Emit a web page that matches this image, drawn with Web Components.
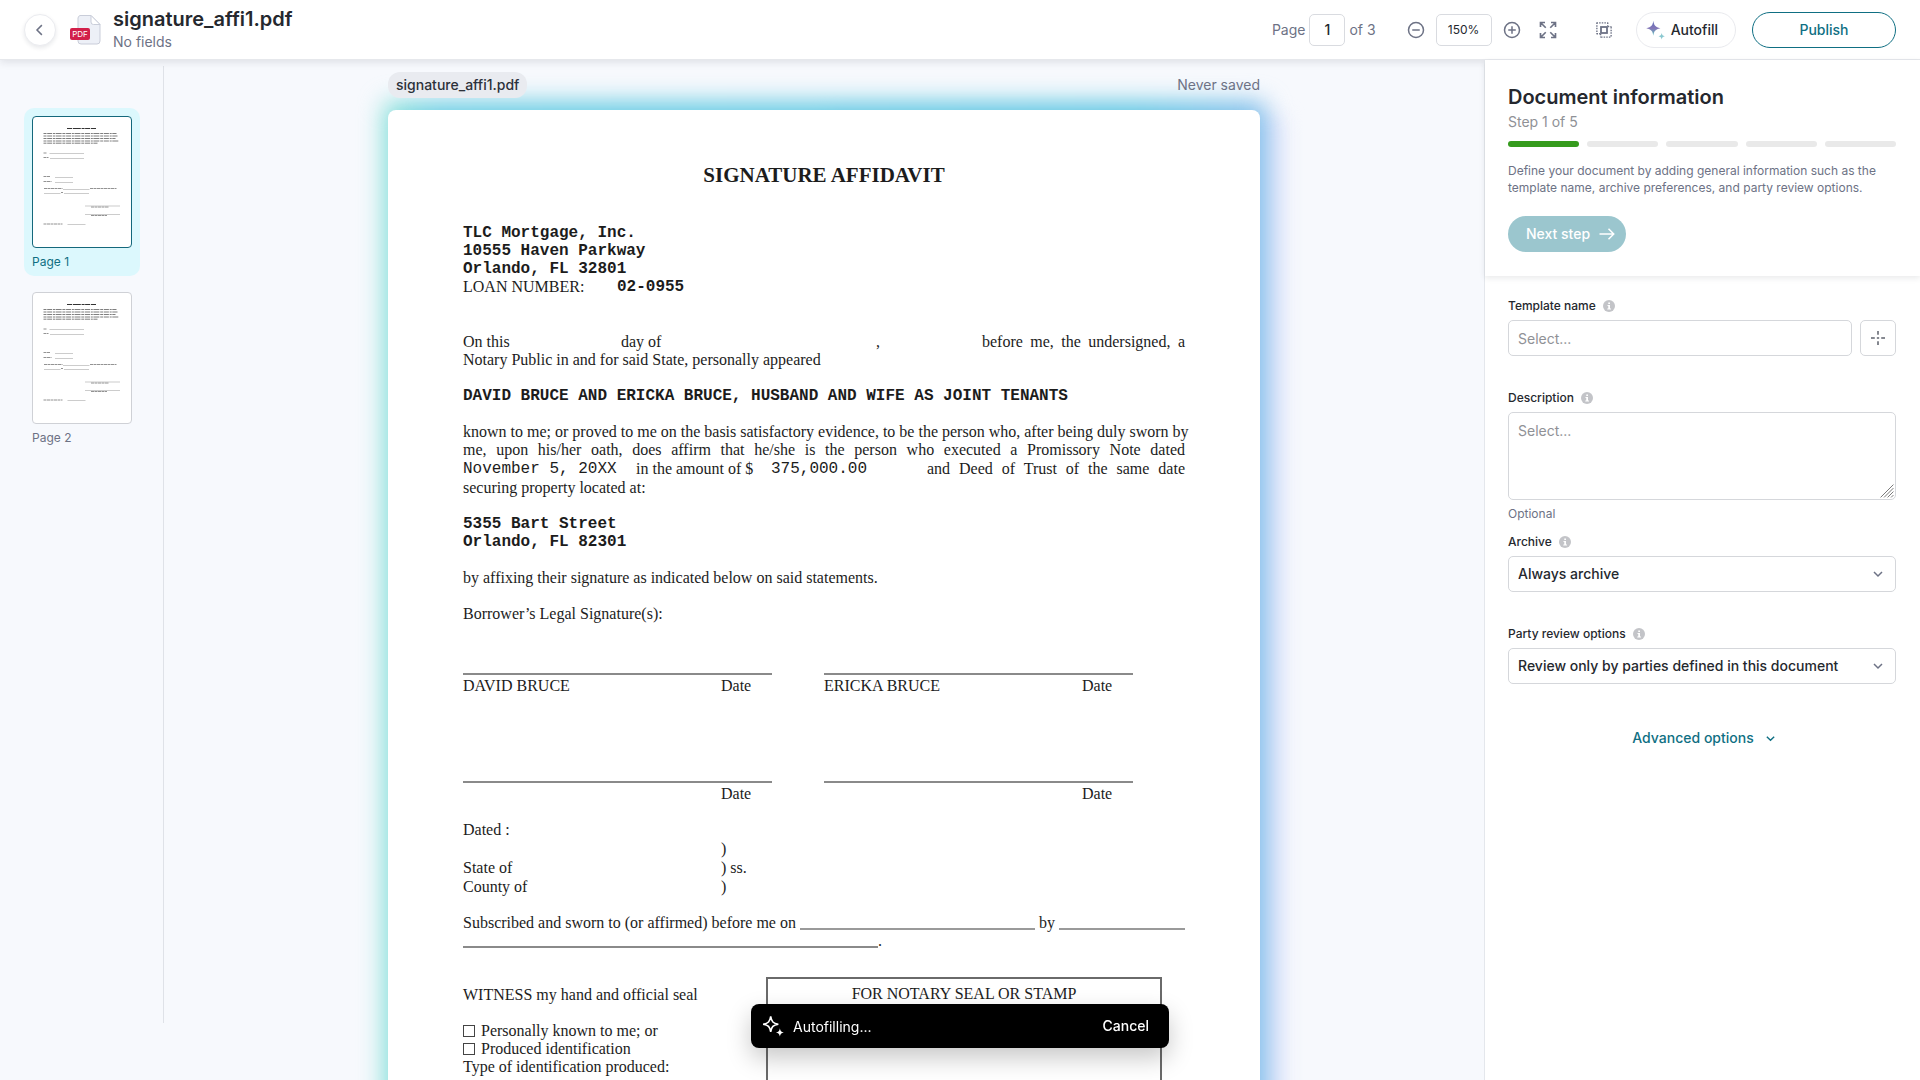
<!DOCTYPE html>
<html lang="en">
<head>
<meta charset="utf-8">
<title>signature_affi1.pdf</title>
<style>
  body { margin: 0; font-family: Inter, "Liberation Sans", sans-serif; color: #25282e; background: #f7f9fd; }
</style>
</head>
<body>
<template-editor></template-editor>
<script>
const define = (name, html, setup) => customElements.define(name, class extends HTMLElement {
  connectedCallback() {
    if (this.shadowRoot) return;
    const t = document.createElement('template');
    t.innerHTML = typeof html === 'function' ? html(this) : html;
    this.attachShadow({ mode: 'open' }).append(t.content.cloneNode(true));
    if (setup) setup(this);
  }
});

/* ---------- icons ---------- */
const ICONS = {
  back: '<path d="M14.5 5.5 8 12l6.5 6.5" fill="none" stroke="currentColor" stroke-width="2"/>',
  minus: '<circle cx="12" cy="12" r="10" fill="none" stroke="currentColor" stroke-width="2"/><path d="M7 12h10" stroke="currentColor" stroke-width="2"/>',
  plus: '<circle cx="12" cy="12" r="10" fill="none" stroke="currentColor" stroke-width="2"/><path d="M7 12h10M12 7v10" stroke="currentColor" stroke-width="2"/>',
  expand: '<g fill="none" stroke="currentColor" stroke-width="2.2"><path d="M2 8V2h6M2 2l7 7M16 2h6v6M22 2l-7 7M2 16v6h6M2 22l7-7M22 16v6h-6M22 22l-7-7"/></g>',
  group: '<g fill="none" stroke="currentColor"><path d="M2 2.500h15M17 2v5M2.500 2v15M2 17h5" stroke-width="1.800" stroke-dasharray="2 1.500"/><path d="M8 21.500h14M21.500 8v14M7.500 17v5M17 7.500h5" stroke-width="1.800" stroke-dasharray="2 1.500"/><rect x="8" y="8" width="8" height="8" stroke-width="2.400"/></g>',
  spark: '<defs><linearGradient id="g" x1="0" y1="0" x2="0" y2="1"><stop offset="0" stop-color="#5f6fb8"/><stop offset=".5" stop-color="#8477b8"/><stop offset="1" stop-color="#5fc3bd"/></linearGradient></defs><path d="M10 1c.9 5.800 2.200 7.400 8.500 9-6.300 1.600-7.600 3.200-8.500 9-.9-5.800-2.200-7.400-8.500-9C7.800 8.400 9.100 6.800 10 1z" fill="url(#g)"/><path d="M20 15.500c.5 2.600 1.200 3.300 3.800 4-2.600.7-3.300 1.400-3.800 4-.5-2.600-1.200-3.300-3.800-4 2.600-.7 3.300-1.400 3.800-4z" fill="#8ac8d0"/>',
  sparkLine: '<path d="M9.500 1.500c.9 5.700 2.600 7.600 8.300 8.500-5.700.9-7.400 2.800-8.300 8.500-.9-5.700-2.600-7.600-8.300-8.500 5.700-.9 7.400-2.800 8.300-8.500z" fill="none" stroke="currentColor" stroke-width="1.700"/><path d="M19.500 14.500c.5 3 1.400 4 4.300 4.500-2.900.5-3.800 1.500-4.300 4.500-.5-3-1.400-4-4.300-4.500 2.900-.5 3.800-1.500 4.300-4.500z" fill="currentColor"/>',
  arrow: '<path d="M2 12h19M14 5l7 7-7 7" fill="none" stroke="currentColor" stroke-width="2"/>',
  info: '<circle cx="12" cy="12" r="12" fill="currentColor"/><path d="M10.500 5h3.500v3h-3.500zM9 10h5v7h2v2.200H8.500V17h2v-4.800H9z" fill="#fff"/>',
  chevron: '<path d="M4 8l8 8 8-8" fill="none" stroke="currentColor" stroke-width="3"/>',
  target: '<path d="M12 0v6.500M12 17.500V24M0 12h6.500M17.500 12H24M10 12h4" stroke="currentColor" stroke-width="2.600"/>',
  grip: '<path d="M1 23 23 1M7 23 23 7M13 23 23 13M19 23l4-4" stroke="currentColor" stroke-width="1.700"/>'
};
define('app-icon', el => `<style>
  :host { display: inline-flex; flex: none; }
  svg { display: block; }
</style><svg width="${el.getAttribute('size') || 18}" height="${el.getAttribute('size') || 18}" viewBox="0 0 24 24" aria-hidden="true">${ICONS[el.getAttribute('name')]}</svg>`);

define('pdf-badge', `<style>
  :host { display: grid; width: 32px; height: 32px; flex: none; }
  svg, b { grid-area: 1 / 1; }
  svg { justify-self: end; }
  b { align-self: center; justify-self: start; width: 20px; height: 12px; margin-top: 8px; background: #d2204a; border-radius: 2px; color: #fff; font: 400 8px/12px Inter, sans-serif; text-align: center; }
</style><svg width="26" height="32" viewBox="0 0 26 32" aria-hidden="true"><path d="M4 1.500h11l9 9V27a3 3 0 0 1-3 3H5a3 3 0 0 1-3-3V4a3 3 0 0 1 2-2.500z" fill="#edf0f7" stroke="#c9cdd9"/><path d="M15 1.500V8a2.500 2.500 0 0 0 2.500 2.500H24z" fill="#fff" stroke="#c9cdd9"/></svg><b>PDF</b>`);

/* ---------- header ---------- */
define('icon-button', el => `<style>
  :host { display: inline-flex; }
  button { all: unset; display: flex; cursor: pointer; color: #6d7285; }
  :host([round]) button { width: 30px; height: 30px; border: 1px solid #ebecf0; border-radius: 50%; align-items: center; justify-content: center; background: #fff; box-shadow: 0 2px 4px rgba(30, 40, 60, .1); }
</style><button aria-label="${el.getAttribute('label')}"><app-icon name="${el.getAttribute('icon')}" size="${el.getAttribute('size') || 18}"></app-icon></button>`);

define('pill-button', `<style>
  :host { display: inline-flex; }
  button { all: unset; box-sizing: border-box; height: 36px; display: flex; align-items: center; justify-content: center; gap: 6px; border: 1px solid #e9eaee; border-radius: 18px; padding: 0 17px 0 8px; font: 500 14px/20px Inter, sans-serif; color: #25282e; background: #fff; cursor: pointer; }
  :host([outline]) button { border-color: #0f6f83; color: #0f6f83; width: 144px; padding: 0; }
  :host([primary]) button { border: 0; background: #9bc6ce; color: #fff; padding: 0 10px 0 18px; gap: 8px; }
</style><button><slot></slot></button>`);

define('app-header', `<style>
  :host { display: flex; align-items: center; height: 59px; padding: 0 24px; background: #fff; border-bottom: 1px solid #e6e8ec; box-shadow: 0 2px 8px rgba(30, 35, 50, .12); position: relative; z-index: 2; flex: none; font-size: 14px; color: #6d7285; }
  pdf-badge { margin: 0 11px 0 14px; }
  .name { flex: 1; }
  h1 { margin: 0; font-size: 20px; line-height: 24px; font-weight: 600; color: #25282e; }
  p { margin: 0; line-height: 22px; }
  .group { display: flex; align-items: center; }
  input { box-sizing: border-box; height: 32px; border: 1px solid #d9dbe0; border-radius: 5px; text-align: center; padding: 0; font: 500 14px Inter, sans-serif; color: #25282e; background: #fff; }
  .pages { gap: 4px; margin-right: 31px; }
  .pages input { width: 36px; }
  .zoom { gap: 11px; margin-right: 38px; }
  .zoom input { width: 56px; font-size: 12px; font-weight: 400; }
  .zoom icon-button:last-child { margin-left: 7px; }
  .actions { gap: 16px; }
  .actions icon-button { margin-right: 7px; }
</style>
<icon-button round icon="back" size="18" label="Back"></icon-button>
<pdf-badge></pdf-badge>
<div class="name"><h1>signature_affi1.pdf</h1><p>No fields</p></div>
<div class="group pages"><label for="page">Page</label><input id="page" value="1"><span>of 3</span></div>
<div class="group zoom">
  <icon-button icon="minus" label="Zoom out"></icon-button><input aria-label="Zoom" value="150%">
  <icon-button icon="plus" label="Zoom in"></icon-button>
  <icon-button icon="expand" label="Fit to screen"></icon-button>
</div>
<div class="group actions">
  <icon-button icon="group" label="Group fields"></icon-button>
  <pill-button><app-icon name="spark" size="20"></app-icon>Autofill</pill-button>
  <pill-button outline>Publish</pill-button>
</div>`);

/* ---------- page list ---------- */
define('page-thumb', `<style>
  :host { display: block; padding: 8px; border-radius: 10px; }
  :host([selected]) { background: #dcf8fd; }
  button { all: unset; display: block; cursor: pointer; font-size: 12px; line-height: 19px; color: #6d7285; }
  svg { display: block; box-sizing: border-box; width: 100px; height: 132px; border: 1px solid #cfd1d6; border-radius: 4px; background: #fff; }
  span { display: block; padding-top: 4px; height: 16px; }
  :host([selected]) svg { border-color: #14687c; }
  :host([selected]) button { color: #0f6f83; }
</style><button><svg viewBox="0 0 98 130" fill="none" aria-hidden="true">
  <path d="M34 11.500h29" stroke="#333" stroke-width="1.100" stroke-dasharray="5 .8 8 .8 3 .5"/>
  <g stroke="#707070" stroke-width=".9" stroke-dasharray="3 .7 5 .8 2 .6 6 .8"><path d="M10.500 16.500h73M10.500 19h74M10.500 21.500h72M10.500 24h75M10.500 26.200h54"/></g>
  <g stroke="#777" stroke-width=".8" stroke-dasharray="3 .5"><path d="M10.500 36h3M10.500 40.500h5M10.500 59.500h6.500M10.500 64.500h8M11 71.500h18.500M57 71.500h26.500M28 75.500h2M58 90h18M58 98.500h16M10.500 107h19" /></g>
  <g stroke="#aaa" stroke-width=".6"><path d="M16.500 36.500h34.500M17 41.500h34M22 60.500h18M22 65.500h18M30 72.500h26.500M11 76.500h16.500M31 76.500h25M52 89h35M52 97.500h35M34.500 107.500h18"/></g>
</svg><span><slot></slot></span></button>`);

define('page-list', `<style>
  :host { display: flex; flex-direction: column; gap: 8px; flex: none; padding: 42px 23px 0 24px; margin: 6px 0 57px; border-right: 1px solid #dfe2e8; }
</style>
<page-thumb selected>Page 1</page-thumb><page-thumb>Page 2</page-thumb>`);

/* ---------- document ---------- */
define('signature-slot', `<style>
  :host { display: grid; grid-template-columns: 258px 1fr; border-top: 2px solid #8a8a8a; padding-top: 2px; }
</style><slot></slot><span>Date</span>`);

define('affidavit-page', `<style>
  :host { display: block; position: relative; flex: 1; font: 16px/18px "Liberation Serif", serif; color: #1c1c1c; }
  .glow, .halo { position: absolute; inset: 0 0 -40px; border-radius: 8px; }
  .halo { inset: 6px -24px -40px 50%; background: #e3e6fb; filter: blur(10px); }
  .glow { inset: -8px -6px -40px -4px; background: linear-gradient(90deg, #86e2d6, #66cce2 6%, #5cc6e2 85%, #7fbcea); filter: blur(12px); }
  .sheet { position: relative; box-sizing: border-box; height: 100%; background: #fff; border-radius: 8px 8px 0 0; padding: 53px 75px 0; overflow: hidden; }
  h2 { margin: 0; font-size: 21px; line-height: 24px; font-weight: 700; text-align: center; }
  p { margin: 0; }
  .mono { font-family: "Liberation Mono", monospace; }
  b.mono, p.mono { font-weight: 700; }
  .gap1 { margin-top: 18px; }
  .gap2 { margin-top: 37px; }
  .line { display: grid; }
  .just { text-align: justify; text-align-last: justify; }
  .full { white-space: nowrap; }
  .loan { grid-template-columns: 154px 1fr; }
  .onthis { grid-template-columns: 158px 255px 106px 1fr; }
  .amount { grid-template-columns: 173px 135px 156px 1fr; line-height: 20px; }
  .signs { display: grid; grid-template-columns: 1fr 1fr; column-gap: 52px; padding-right: 52px; }
  .one { margin-top: 50px; }
  .two { margin-top: 86px; }
  .venue { grid-template-columns: 258px 1fr; line-height: 19px; }
  .oath { display: flex; gap: 4px; }
  .blank { box-sizing: border-box; height: 16px; border-bottom: 2px solid #9a9a9a; width: 235px; }
  .rest { flex: 1; width: auto; }
  .long { width: 415px; border-color: #8a8a8a; }
  .tail { gap: 0; }
  .foot { display: grid; grid-template-columns: 303px 396px; margin-top: 27px; }
  .stamp { border: 2px solid #6a6a6a; height: 200px; text-align: center; line-height: 30px; box-sizing: border-box; }
  .left { padding-top: 9px; }
  label { display: flex; align-items: center; gap: 6px; }
  input { appearance: none; margin: 0; width: 12px; height: 12px; border: 1px solid #444; background: #fff; }
</style>
<div class="halo"></div><div class="glow"></div>
<div class="sheet">
  <h2>SIGNATURE AFFIDAVIT</h2>
  <p class="mono gap2">TLC Mortgage, Inc.<br>10555 Haven Parkway<br>Orlando, FL 32801</p>
  <div class="line loan"><span>LOAN NUMBER:</span><b class="mono">02-0955</b></div>
  <div class="line onthis gap2"><span>On this</span><span>day of</span><span>,</span><span class="just">before me, the undersigned, a</span></div>
  <p>Notary Public in and for said State, personally appeared</p>
  <p class="mono gap1">DAVID BRUCE AND ERICKA BRUCE, HUSBAND AND WIFE AS JOINT TENANTS</p>
  <p class="just full gap1">known to me; or proved to me on the basis satisfactory evidence, to be the person who, after being duly sworn by</p>
  <p class="just">me, upon his/her oath, does affirm that he/she is the person who executed a Promissory Note dated</p>
  <div class="line amount"><span class="mono">November 5, 20XX</span><span>in the amount of $</span><span class="mono">375,000.00</span><span class="just">and Deed of Trust of the same date</span></div>
  <p>securing property located at:</p>
  <p class="mono gap1">5355 Bart Street<br>Orlando, FL 82301</p>
  <p class="gap1">by affixing their signature as indicated below on said statements.</p>
  <p class="gap1">Borrower’s Legal Signature(s):</p>
  <div class="signs one"><signature-slot><span>DAVID BRUCE</span></signature-slot><signature-slot><span>ERICKA BRUCE</span></signature-slot></div>
  <div class="signs two"><signature-slot><span></span></signature-slot><signature-slot><span></span></signature-slot></div>
  <p class="gap1">Dated :</p>
  <div class="line venue"><span></span><span>)</span><span>State of</span><span>) ss.</span><span>County of</span><span>)</span></div>
  <div class="oath gap1"><span>Subscribed and sworn to (or affirmed) before me on</span><span class="blank"></span><span>by</span><span class="blank rest"></span></div>
  <div class="oath tail"><span class="blank long"></span><span>.</span></div>
  <div class="foot">
    <div class="left">
      <p>WITNESS my hand and official seal</p>
      <label class="gap1"><input type="checkbox">Personally known to me; or</label>
      <label><input type="checkbox">Produced identification</label>
      <p>Type of identification produced:</p>
    </div>
    <div class="stamp">FOR NOTARY SEAL OR STAMP</div>
  </div>
</div>`);

define('document-canvas', `<style>
  :host { display: flex; flex: 1; justify-content: center; min-width: 0; overflow: hidden; }
  .column { display: flex; flex-direction: column; flex: 1; max-width: 872px; }
  .meta { display: flex; justify-content: space-between; align-items: center; padding: 12px 0; position: relative; z-index: 1; font-size: 14px; line-height: 26px; color: #6d7285; }
  .file { background: #e9ebf0; color: #2c313a; border-radius: 12px; padding: 0 8px; font-weight: 500; }
</style>
<div class="column">
  <div class="meta"><span class="file">signature_affi1.pdf</span><span>Never saved</span></div>
  <affidavit-page></affidavit-page>
</div>`);

/* ---------- side panel ---------- */
const FIELD = `
  :host { display: block; }
  .label { display: flex; align-items: center; gap: 7px; font-size: 12px; line-height: 16px; font-weight: 500; margin-bottom: 6px; color: #25282e; }
  .label app-icon { color: #c3c4c8; }
  .box { display: grid; }
  .box > * { grid-area: 1 / 1; }
  .box > app-icon { align-self: center; justify-self: end; margin-right: 12px; color: #6d7285; pointer-events: none; }
  input, select, textarea { box-sizing: border-box; width: 100%; height: 36px; margin: 0; padding: 0 9px; border: 1px solid #d5d7db; border-radius: 5px; background: #fff; color: #25282e; font: 500 14px/20px Inter, sans-serif; appearance: none; }
  input, textarea { font-weight: 400; }
  ::placeholder { color: #8f9196; opacity: 1; }`;
const labelOf = el => `<div class="label"><label for="c">${el.getAttribute('label')}</label><app-icon name="info" size="12"></app-icon></div>`;

define('text-field', el => `<style>${FIELD}
  .row { display: flex; gap: 8px; }
  button { all: unset; box-sizing: border-box; flex: none; width: 36px; height: 36px; display: flex; align-items: center; justify-content: center; border: 1px solid #d5d7db; border-radius: 5px; color: #5f636d; cursor: pointer; }
</style>${labelOf(el)}<div class="row"><input id="c" placeholder="Select..."><button aria-label="Insert variable"><app-icon name="target" size="14"></app-icon></button></div>`);

define('area-field', el => `<style>${FIELD}
  textarea { height: 88px; padding: 8px 9px; resize: none; display: block; }
  .box > app-icon { align-self: end; margin: 0 2px 2px 0; color: #777; }
  small { display: block; font-size: 12px; line-height: 16px; color: #6d7285; margin-top: 6px; }
</style>${labelOf(el)}<div class="box"><textarea id="c" placeholder="Select..."></textarea><app-icon name="grip" size="14"></app-icon></div><small>Optional</small>`);

define('select-field', el => `<style>${FIELD}</style>${labelOf(el)}<div class="box"><select id="c"><option>${el.getAttribute('value')}</option></select><app-icon name="chevron" size="12"></app-icon></div>`);

define('step-bar', el => `<style>
  :host { display: flex; gap: 8px; }
  i { flex: 1; height: 6px; border-radius: 3px; background: #e9e9e9; }
  i:first-of-type { background: #359b1d; }
</style>${'<i></i>'.repeat(+el.getAttribute('steps'))}`);

define('info-panel', `<style>
  :host { display: block; flex: none; width: 436px; box-sizing: border-box; background: #fff; border-left: 1px solid #e4e7ec; position: relative; z-index: 3; }
  .top { padding: 23px 24px 24px 23px; box-shadow: 0 2px 6px rgba(30, 35, 50, .1); }
  h2 { margin: 0; font-size: 20px; line-height: 28px; font-weight: 600; color: #25282e; }
  .step { margin: 0 0 8px; font-size: 14px; line-height: 22px; color: #8f9196; }
  .about { margin: 15px 0 20px; font-size: 12px; line-height: 17px; color: #6d7285; }
  form { display: flex; flex-direction: column; padding: 22px 24px 0 23px; }
  text-field, .gap { margin-bottom: 34px; }
  area-field { margin-bottom: 12px; }
  .more { all: unset; display: flex; align-self: center; align-items: center; gap: 11px; margin: 10px 0 0 4px; font: 500 14px/20px Inter, sans-serif; color: #0f6f83; cursor: pointer; }
</style>
<div class="top">
  <h2>Document information</h2>
  <p class="step">Step 1 of 5</p>
  <step-bar steps="5"></step-bar>
  <p class="about">Define your document by adding general information such as the template name, archive preferences, and party review options.</p>
  <pill-button primary>Next step<app-icon name="arrow" size="18"></app-icon></pill-button>
</div>
<form>
  <text-field label="Template name"></text-field>
  <area-field label="Description"></area-field>
  <select-field class="gap" label="Archive" value="Always archive"></select-field>
  <select-field class="gap" label="Party review options" value="Review only by parties defined in this document"></select-field>
  <button class="more" type="button">Advanced options<app-icon name="chevron" size="11"></app-icon></button>
</form>`);

/* ---------- toast and shell ---------- */
define('autofill-toast', `<style>
  :host { position: fixed; z-index: 4; left: 50%; bottom: 32px; transform: translateX(-50%); box-sizing: border-box; width: 418px; height: 44px; display: flex; align-items: center; gap: 9px; padding: 0 20px 0 11px; border-radius: 8px; background: #000; color: #fff; font-size: 14px; box-shadow: 0 10px 24px rgba(0, 0, 0, .22); }
  span { flex: 1; }
  button { all: unset; font: 500 14px/20px Inter, sans-serif; cursor: pointer; }
</style><app-icon name="sparkLine" size="22"></app-icon><span>Autofilling...</span><button>Cancel</button>`);

define('template-editor', `<style>
  :host { display: flex; flex-direction: column; height: 100vh; overflow: hidden; }
  main { display: flex; flex: 1; min-height: 0; }
</style>
<app-header></app-header>
<main><page-list></page-list><document-canvas></document-canvas><info-panel></info-panel></main>
<autofill-toast></autofill-toast>`);
</script>
</body>
</html>
